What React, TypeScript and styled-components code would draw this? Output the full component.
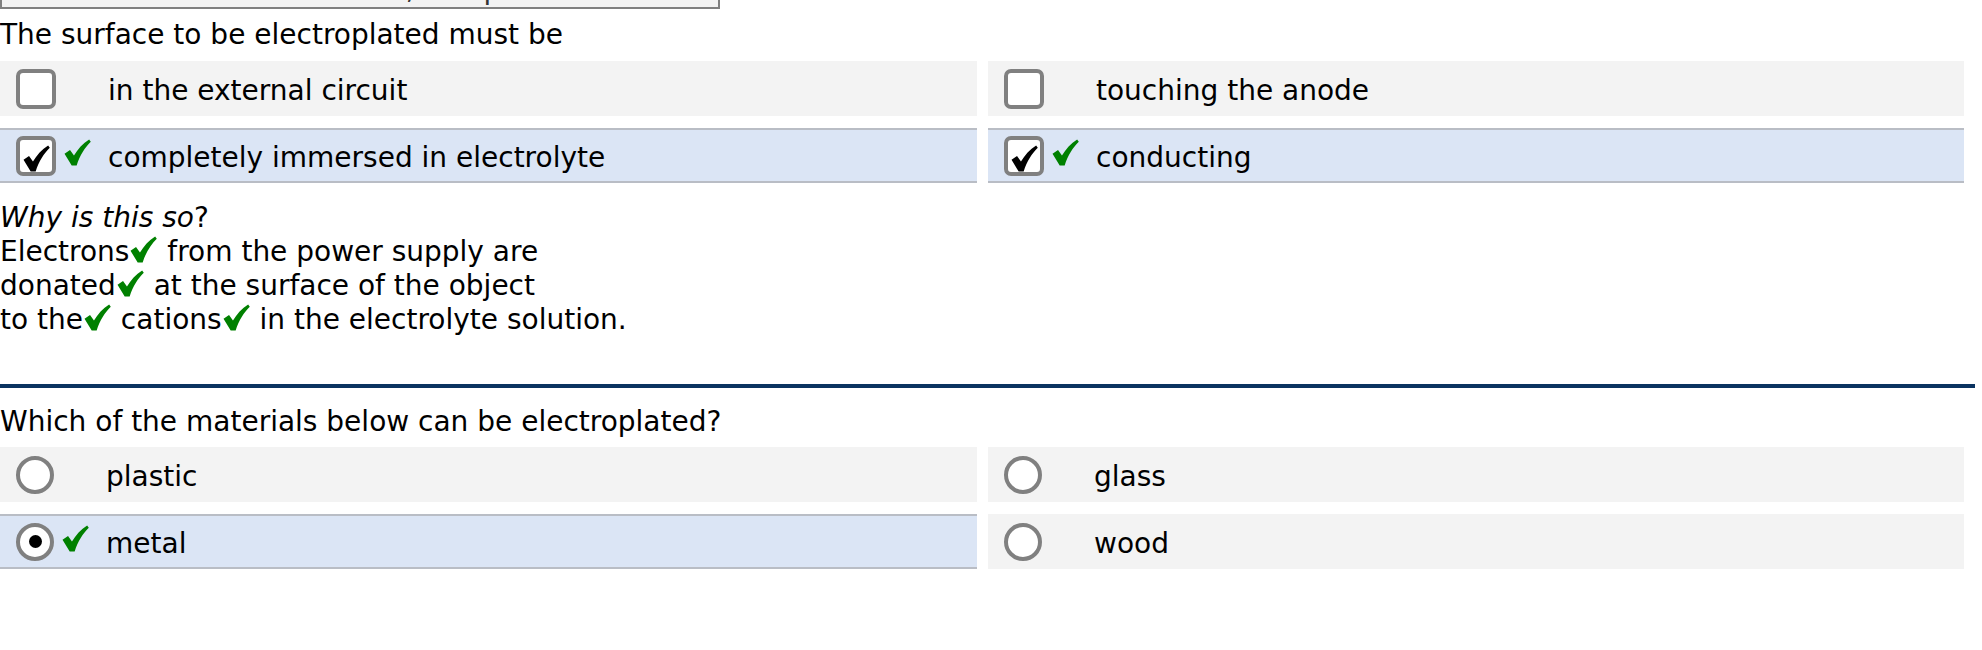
import React from "react";
import styled, { createGlobalStyle } from "styled-components";

const Global = createGlobalStyle`
  html, body { margin: 0; padding: 0; background: #ffffff; }
  body {
    font-family: "DejaVu Sans", Verdana, sans-serif;
    font-size: 28px;
    color: #000000;
  }
`;

const Page = styled.div`
  width: 1975px;
  display: flex;
  flex-direction: column;
`;

const CroppedBox = styled.div`
  width: 720px;
  height: 9px;
  box-sizing: border-box;
  overflow: hidden;
  background: #f2f2f2;
  border: 2px solid #7f7f7f;
  border-top: none;
  margin-bottom: 9px;
  padding-left: 14px;
  display: flex;
  align-items: flex-end;
  line-height: 34px;
  color: #333;
  white-space: nowrap;
`;

const Prompt = styled.p<{ $top?: number; $bottom?: number }>`
  margin: ${(p) => p.$top ?? 0}px 0 ${(p) => p.$bottom ?? 9}px;
  line-height: 34px;
`;

const Options = styled.div`
  display: grid;
  grid-template-columns: 977px 976px;
  column-gap: 11px;
  row-gap: 12px;
`;

const Option = styled.div<{ $selected?: boolean }>`
  height: 55px;
  box-sizing: border-box;
  display: flex;
  align-items: center;
  padding-left: 16px;
  background: ${(p) => (p.$selected ? "#dbe5f5" : "#f3f3f3")};
  border-top: 2px solid ${(p) => (p.$selected ? "#b9bdc5" : "transparent")};
  border-bottom: 2px solid ${(p) => (p.$selected ? "#b9bdc5" : "transparent")};
`;

const CheckBox = styled.span`
  width: 40px;
  height: 40px;
  box-sizing: border-box;
  border: 4px solid #808080;
  border-radius: 7px;
  background: #ffffff;
  flex-shrink: 0;
  display: flex;
  align-items: flex-end;
  justify-content: flex-start;
  padding-left: 3px;
  overflow: hidden;
`;

const Radio = styled.span`
  width: 38px;
  height: 38px;
  box-sizing: border-box;
  border: 4px solid #808080;
  border-radius: 50%;
  background: #ffffff;
  flex-shrink: 0;
  display: flex;
  align-items: center;
  justify-content: center;
`;

const Dot = styled.span`
  width: 13px;
  height: 13px;
  border-radius: 50%;
  background: #000;
`;

const MarkSlot = styled.span`
  width: 52px;
  flex-shrink: 0;
  display: flex;
  align-items: flex-start;
  align-self: stretch;
  padding-top: 9px;
  box-sizing: border-box;
  padding-left: 8px;
`;

const TickSvg = styled.svg<{ $color: string }>`
  width: 27px;
  height: 27px;
  flex-shrink: 0;
  fill: ${(p) => p.$color};
`;

const InlineTickSvg = styled(TickSvg)`
  vertical-align: -2px;
  margin-left: 1px;
  margin-right: 1px;
`;

const Label = styled.span`
  line-height: 34px;
  padding-top: 4px;
  white-space: nowrap;
`;

const Explanation = styled.div`
  margin-top: 18px;
  line-height: 34px;
`;

const Line = styled.div`
  white-space: nowrap;
`;

const Divider = styled.div`
  margin-top: 47px;
  height: 4px;
  background: #0a3360;
`;

const tickPath =
  "M0.5 14.2 L5.8 10.6 L9.6 16 C13.2 9.6 18.2 4 24.2 0.4 L25.8 2.6 C20.2 8.2 15.2 15.6 12.2 25.6 L7.4 25.6 Z";

function Tick({ color, inline }: { color: string; inline?: boolean }) {
  const Comp = inline ? InlineTickSvg : TickSvg;
  return (
    <Comp $color={color} viewBox="0 0 26 26" aria-hidden="true">
      <path d={tickPath} />
    </Comp>
  );
}

type Item = { label: string; selected?: boolean };

const checkItems: Item[] = [
  { label: "in the external circuit" },
  { label: "touching the anode" },
  { label: "completely immersed in electrolyte", selected: true },
  { label: "conducting", selected: true },
];

const radioItems: Item[] = [
  { label: "plastic" },
  { label: "glass" },
  { label: "metal", selected: true },
  { label: "wood" },
];

const GREEN = "#008000";

export default function App() {
  return (
    <>
      <Global />
      <Page>
        <CroppedBox>Choose the correct answers, complete the sentence below, and justify it</CroppedBox>
        <Prompt>The surface to be electroplated must be</Prompt>
        <Options>
          {checkItems.map((it) => (
            <Option key={it.label} $selected={it.selected}>
              <CheckBox>{it.selected && <Tick color="#000" />}</CheckBox>
              <MarkSlot>{it.selected && <Tick color={GREEN} />}</MarkSlot>
              <Label>{it.label}</Label>
            </Option>
          ))}
        </Options>
        <Explanation>
          <Line>
            <em>Why is this so</em>?
          </Line>
          <Line>
            Electrons<Tick color={GREEN} inline /> from the power supply are
          </Line>
          <Line>
            donated<Tick color={GREEN} inline /> at the surface of the object
          </Line>
          <Line>
            to the<Tick color={GREEN} inline /> cations<Tick color={GREEN} inline /> in the electrolyte solution.
          </Line>
        </Explanation>
        <Divider />
        <Prompt $top={17} $bottom={8}>Which of the materials below can be electroplated?</Prompt>
        <Options>
          {radioItems.map((it) => (
            <Option key={it.label} $selected={it.selected}>
              <Radio>{it.selected && <Dot />}</Radio>
              <MarkSlot>{it.selected && <Tick color={GREEN} />}</MarkSlot>
              <Label>{it.label}</Label>
            </Option>
          ))}
        </Options>
      </Page>
    </>
  );
}
